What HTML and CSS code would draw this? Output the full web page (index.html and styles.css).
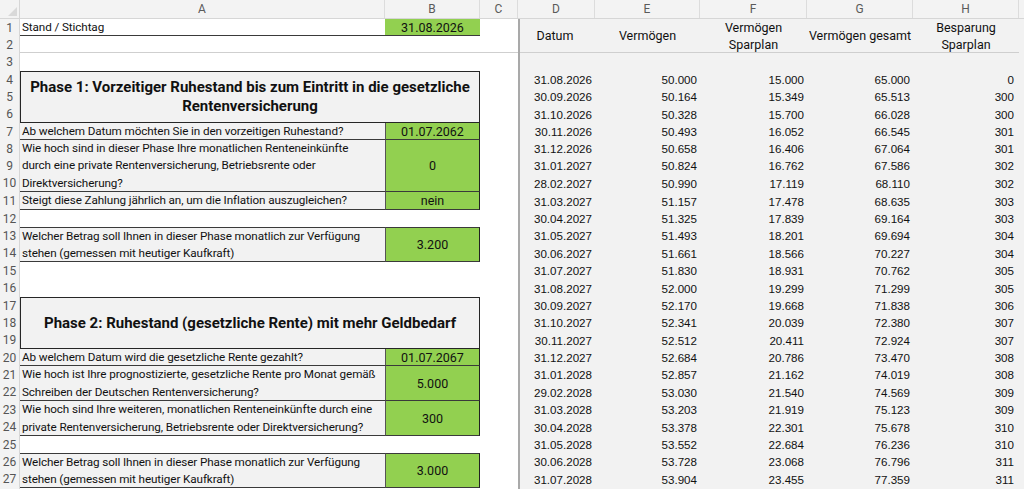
FILE: index.html
```html
<!DOCTYPE html>
<html lang="de">
<head>
<meta charset="utf-8">
<title>Rentenplanung</title>
<link rel="stylesheet" href="styles.css">
</head>
<body>
<div class="sheet">
  <div class="colhdr">
    <div class="corner"><span class="tri"></span></div>
    <div class="ch ch-a">A</div>
    <div class="ch ch-b">B</div>
    <div class="ch ch-c">C</div>
    <div class="ch ch-d">D</div>
    <div class="ch ch-e">E</div>
    <div class="ch ch-f">F</div>
    <div class="ch ch-g">G</div>
    <div class="ch ch-h">H</div>
    <div class="ch ch-rest"></div>
  </div>
  <div class="body">
    <div class="rowhdr">
      <div>1</div><div>2</div><div>3</div><div>4</div><div>5</div><div>6</div><div>7</div><div>8</div><div>9</div>
      <div>10</div><div>11</div><div>12</div><div>13</div><div>14</div><div>15</div><div>16</div><div>17</div><div>18</div>
      <div>19</div><div>20</div><div>21</div><div>22</div><div>23</div><div>24</div><div>25</div><div>26</div><div>27</div>
    </div>

    <div class="left">
      <div class="cell lbl stand">Stand / Stichtag</div>
      <div class="cell val stand">31.08.2026</div>
      <div class="blank row2"></div>
      <div class="blank"></div>

      <div class="phase span3">Phase 1: Vorzeitiger Ruhestand bis zum Eintritt in die gesetzliche<br>Rentenversicherung</div>

      <div class="cell q">Ab welchem Datum möchten Sie in den vorzeitigen Ruhestand?</div>
      <div class="cell val">01.07.2062</div>
      <div class="cell q span3">Wie hoch sind in dieser Phase Ihre monatlichen Renteneinkünfte<br>durch eine private Rentenversicherung, Betriebsrente oder<br>Direktversicherung?</div>
      <div class="cell val span3">0</div>
      <div class="cell q">Steigt diese Zahlung jährlich an, um die Inflation auszugleichen?</div>
      <div class="cell val">nein</div>
      <div class="blank"></div>
      <div class="cell q top span2">Welcher Betrag soll Ihnen in dieser Phase monatlich zur Verfügung<br>stehen (gemessen mit heutiger Kaufkraft)</div>
      <div class="cell val top span2">3.200</div>
      <div class="blank span2"></div>

      <div class="phase span3">Phase 2: Ruhestand (gesetzliche Rente) mit mehr Geldbedarf</div>

      <div class="cell q">Ab welchem Datum wird die gesetzliche Rente gezahlt?</div>
      <div class="cell val">01.07.2067</div>
      <div class="cell q span2">Wie hoch ist Ihre prognostizierte, gesetzliche Rente pro Monat gemäß<br>Schreiben der Deutschen Rentenversicherung?</div>
      <div class="cell val span2">5.000</div>
      <div class="cell q span2">Wie hoch sind Ihre weiteren, monatlichen Renteneinkünfte durch eine<br>private Rentenversicherung, Betriebsrente oder Direktversicherung?</div>
      <div class="cell val span2">300</div>
      <div class="blank"></div>
      <div class="cell q top span2">Welcher Betrag soll Ihnen in dieser Phase monatlich zur Verfügung<br>stehen (gemessen mit heutiger Kaufkraft)</div>
      <div class="cell val top span2">3.000</div>
    </div>

    <div class="colc"><div class="colc-head"></div></div>

    <div class="right">
      <div class="th">Datum</div>
      <div class="th">Vermögen</div>
      <div class="th">Vermögen<br>Sparplan</div>
      <div class="th">Vermögen gesamt</div>
      <div class="th">Besparung<br>Sparplan</div>
      <div class="gap"></div>

      <div>31.08.2026</div><div>50.000</div><div>15.000</div><div>65.000</div><div>0</div>
      <div>30.09.2026</div><div>50.164</div><div>15.349</div><div>65.513</div><div>300</div>
      <div>31.10.2026</div><div>50.328</div><div>15.700</div><div>66.028</div><div>300</div>
      <div>30.11.2026</div><div>50.493</div><div>16.052</div><div>66.545</div><div>301</div>
      <div>31.12.2026</div><div>50.658</div><div>16.406</div><div>67.064</div><div>301</div>
      <div>31.01.2027</div><div>50.824</div><div>16.762</div><div>67.586</div><div>302</div>
      <div>28.02.2027</div><div>50.990</div><div>17.119</div><div>68.110</div><div>302</div>
      <div>31.03.2027</div><div>51.157</div><div>17.478</div><div>68.635</div><div>303</div>
      <div>30.04.2027</div><div>51.325</div><div>17.839</div><div>69.164</div><div>303</div>
      <div>31.05.2027</div><div>51.493</div><div>18.201</div><div>69.694</div><div>304</div>
      <div>30.06.2027</div><div>51.661</div><div>18.566</div><div>70.227</div><div>304</div>
      <div>31.07.2027</div><div>51.830</div><div>18.931</div><div>70.762</div><div>305</div>
      <div>31.08.2027</div><div>52.000</div><div>19.299</div><div>71.299</div><div>305</div>
      <div>30.09.2027</div><div>52.170</div><div>19.668</div><div>71.838</div><div>306</div>
      <div>31.10.2027</div><div>52.341</div><div>20.039</div><div>72.380</div><div>307</div>
      <div>30.11.2027</div><div>52.512</div><div>20.411</div><div>72.924</div><div>307</div>
      <div>31.12.2027</div><div>52.684</div><div>20.786</div><div>73.470</div><div>308</div>
      <div>31.01.2028</div><div>52.857</div><div>21.162</div><div>74.019</div><div>308</div>
      <div>29.02.2028</div><div>53.030</div><div>21.540</div><div>74.569</div><div>309</div>
      <div>31.03.2028</div><div>53.203</div><div>21.919</div><div>75.123</div><div>309</div>
      <div>30.04.2028</div><div>53.378</div><div>22.301</div><div>75.678</div><div>310</div>
      <div>31.05.2028</div><div>53.552</div><div>22.684</div><div>76.236</div><div>310</div>
      <div>30.06.2028</div><div>53.728</div><div>23.068</div><div>76.796</div><div>311</div>
      <div>31.07.2028</div><div>53.904</div><div>23.455</div><div>77.359</div><div>311</div>
    </div>
    <div class="rest"></div>
  </div>
</div>
</body>
</html>
```
FILE: styles.css
```css
:root {
  --rows: 17px 17px 18px 17px 17px 18px 17px 17px 17px 18px 18px 17px 17px 18px 17px 18px 17px 17px 18px 17px 17px 18px 17px 18px 17px 17px 18px;
  --ui: "Roboto", "Liberation Sans", sans-serif;
  --num: "Liberation Sans", Arial, sans-serif;
  --line: #3a3a3a;
  --green: #92d050;
  --grey: #f2f2f2;
}

* { box-sizing: border-box; }

html, body {
  margin: 0;
  padding: 0;
  width: 1024px;
  height: 489px;
  overflow: hidden;
  background: #ffffff;
}

.sheet {
  width: 1024px;
  height: 489px;
  font-family: var(--ui);
  color: #111;
}

/* column header bar */
.colhdr {
  display: flex;
  height: 19px;
  background: #f3f3f3;
  border-bottom: 1px solid #d6d6d6;
}
.corner {
  position: relative;
  width: 20px;
  border-right: 1px solid #d6d6d6;
}
.tri {
  position: absolute;
  right: 2px;
  bottom: 2px;
  width: 0;
  height: 0;
  border-left: 9px solid transparent;
  border-bottom: 9px solid #d9d9d9;
}
.ch {
  display: flex;
  align-items: center;
  justify-content: center;
  font-size: 12px;
  color: #5a5a5a;
  border-right: 1px solid #dcdcdc;
}
.ch-a { width: 365px; }
.ch-b { width: 95px; }
.ch-c { width: 38px; }
.ch-d { width: 77px; }
.ch-e { width: 105px; }
.ch-f { width: 107px; }
.ch-g { width: 106px; }
.ch-h { width: 106px; }
.ch-rest { flex: 1; border-right: 0; }

/* body */
.body {
  display: flex;
  height: 470px;
}

.rowhdr {
  width: 20px;
  display: grid;
  grid-template-rows: var(--rows);
  background: #f3f3f3;
  border-right: 1px solid #d6d6d6;
  font-size: 12px;
  color: #555;
}
.rowhdr div {
  display: flex;
  align-items: center;
  justify-content: center;
}

.left {
  width: 460px;
  display: grid;
  grid-template-columns: 365px 95px;
  grid-template-rows: var(--rows);
  font-size: 11.7px;
  letter-spacing: -0.1px;
}

.cell {
  display: flex;
  align-items: center;
  padding-top: 1px;
  line-height: 17.4px;
  white-space: nowrap;
  border-bottom: 1px solid var(--line);
}
.lbl { padding-left: 2px; background: #fff; }
.q { padding-left: 2px; background: var(--grey); }
.val {
  justify-content: center;
  background: var(--green);
  border-left: 1px solid #555;
  border-right: 1px solid #222;
  font-size: 12.5px;
  letter-spacing: 0;
}
.stand.val { border-left: 0; border-right: 0; }
.top { border-top: 1px solid var(--line); }

.blank { grid-column: span 2; }
.row2 { border-bottom: 1px solid #cfcfcf; }

.span2 { grid-row: span 2; }
.span3 { grid-row: span 3; }
.blank.span2 { grid-column: span 2; grid-row: span 2; }

.phase {
  grid-column: span 2;
  display: flex;
  align-items: center;
  justify-content: center;
  text-align: center;
  white-space: nowrap;
  background: var(--grey);
  border: 1px solid #262626;
  font-weight: 700;
  font-size: 15px;
  letter-spacing: 0;
  line-height: 19px;
}

.colc {
  width: 38px;
}
.colc-head {
  height: 34px;
  border-bottom: 1px solid #cfcfcf;
}

.right {
  width: 501px;
  display: grid;
  grid-template-columns: 75px 105px 107px 106px 106px;
  grid-template-rows: var(--rows);
  background: var(--grey);
  border-left: 2px solid #a9a9a9;
  font-family: var(--num);
  font-size: 11.6px;
  color: #111;
}
.right div {
  display: flex;
  align-items: center;
  justify-content: flex-end;
  padding-right: 3px;
}
.right div:nth-child(5n+1) { padding-right: 5px; }
.right .th {
  grid-row: span 2;
  justify-content: center;
  text-align: center;
  padding-right: 0;
  font-family: var(--ui);
  font-size: 12.5px;
  line-height: 17px;
  border-bottom: 1px solid #cfcfcf;
}
.right .gap { grid-column: span 5; }

.rest {
  flex: 1;
  background: var(--grey);
}
```
